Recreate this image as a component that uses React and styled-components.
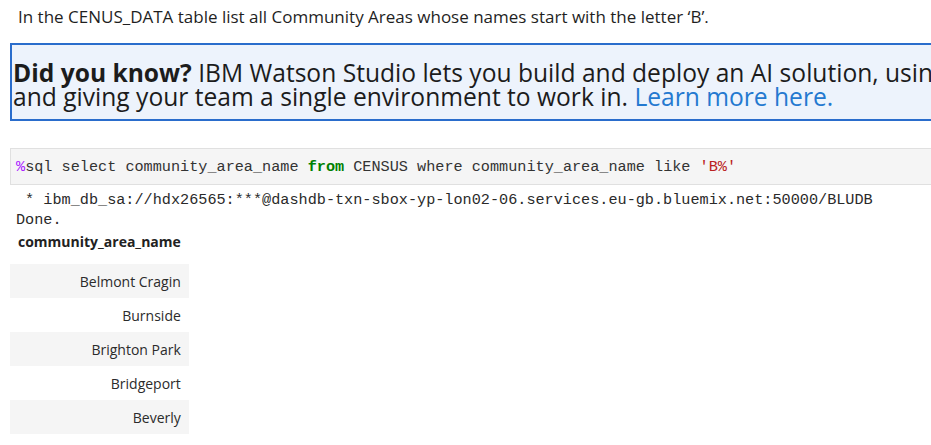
import React from 'react';
import styled, { createGlobalStyle } from 'styled-components';

const GlobalStyle = createGlobalStyle`
  body {
    margin: 0;
    background: #fff;
    font-family: "Open Sans", "Noto Sans", sans-serif;
    color: #222;
  }
`;

const Page = styled.div`
  width: 931px;
  height: 445px;
  overflow: hidden;
  padding-left: 10px;
  box-sizing: border-box;
`;

const Prompt = styled.p`
  margin: 0;
  padding: 6px 0 0 8px;
  font-size: 17px;
  line-height: 22px;
  color: #1f1f1f;
  white-space: nowrap;
`;

const Callout = styled.div`
  margin-top: 15px;
  width: 1000px;
  height: 78px;
  box-sizing: border-box;
  border: 2px solid #2a6dcc;
  background: #edf3fc;
  padding: 16px 0 0 1px;
  font-size: 24.6px;
  line-height: 24px;
  color: #1c1c1c;
  white-space: nowrap;
`;

const Strong = styled.strong`
  font-weight: 700;
`;

const Link = styled.a`
  color: #2479d0;
  text-decoration: none;
`;

const CodeCell = styled.div`
  margin-top: 27px;
  width: 940px;
  height: 37px;
  box-sizing: border-box;
  background: #f5f5f5;
  border: 1px solid #e0e0e0;
  border-right: none;
  padding: 0 0 0 5px;
  display: flex;
  align-items: center;
  font-family: "Liberation Mono", "DejaVu Sans Mono", monospace;
  font-size: 15.2px;
  color: #333;
  white-space: pre;
`;

const Tok = styled.span`
  color: ${p => p.$c};
  font-weight: ${p => (p.$bold ? 700 : 400)};
`;

const Output = styled.pre`
  margin: 5px 0 0 6px;
  font-family: "Liberation Mono", "DejaVu Sans Mono", monospace;
  font-size: 15.2px;
  line-height: 20px;
  color: #2a2a2a;
`;

const Table = styled.table`
  border-collapse: collapse;
  font-size: 14px;
  color: #222;
`;

const Th = styled.th`
  text-align: right;
  font-weight: 700;
  padding: 2px 8px 12px;
  line-height: 20px;
`;

const Tr = styled.tr`
  background: ${p => (p.$odd ? '#f5f5f5' : '#fff')};
`;

const Td = styled.td`
  text-align: right;
  height: 34px;
  padding: 0 8px;
  font-weight: 400;
  color: #2b2b2b;
`;

const areas = ['Belmont Cragin', 'Burnside', 'Brighton Park', 'Bridgeport', 'Beverly'];

export default function App() {
  return (
    <>
      <GlobalStyle />
      <Page>
        <Prompt>In the CENUS_DATA table list all Community Areas whose names start with the letter ‘B’.</Prompt>
        <Callout>
          <Strong>Did you know?</Strong> IBM Watson Studio lets you build and deploy an AI solution, using the best of open source
          <br />
          and giving your team a single environment to work in. <Link href="#">Learn more here.</Link>
        </Callout>
        <CodeCell>
          <Tok $c="#aa22ff">%</Tok>sql select community_area_name <Tok $c="#008000" $bold>from</Tok> CENSUS where community_area_name like <Tok $c="#ba2121">'B%'</Tok>
        </CodeCell>
        <Output>{` * ibm_db_sa://hdx26565:***@dashdb-txn-sbox-yp-lon02-06.services.eu-gb.bluemix.net:50000/BLUDB
Done.`}</Output>
        <Table>
          <thead>
            <tr>
              <Th>community_area_name</Th>
            </tr>
          </thead>
          <tbody>
            {areas.map((a, i) => (
              <Tr key={a} $odd={i % 2 === 0}>
                <Td>{a}</Td>
              </Tr>
            ))}
          </tbody>
        </Table>
      </Page>
    </>
  );
}
